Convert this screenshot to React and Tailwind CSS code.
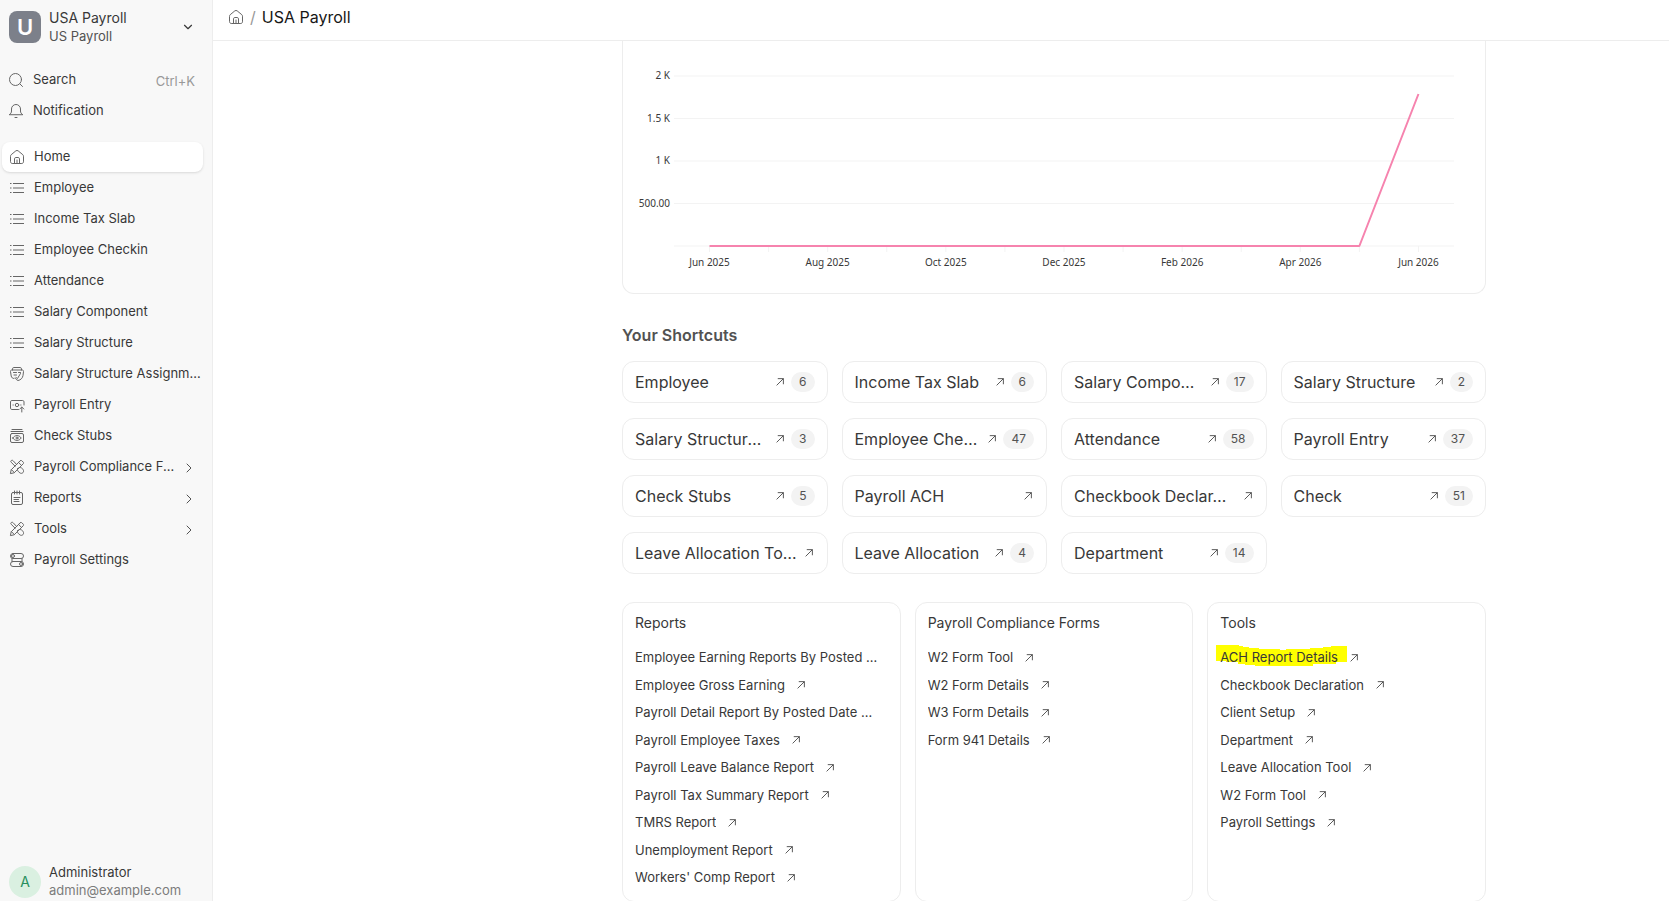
import React from 'react';
import { ChevronDown, ChevronRight } from 'lucide-react';

const Icon = ({ children, className = 'size-4 shrink-0 text-[#666666]' }) => (
  <svg
    viewBox="0 0 16 16"
    fill="none"
    stroke="currentColor"
    strokeLinecap="round"
    strokeLinejoin="round"
    aria-hidden="true"
    className={className}
  >
    {children}
  </svg>
);

const HomeIcon = () => (
  <Icon>
    <path d="M1.5 7.2c0-.6.3-1.1.7-1.5l4.6-3.8a1.9 1.9 0 0 1 2.4 0l4.6 3.8c.4.4.7.9.7 1.5v5.6c0 .9-.8 1.7-1.7 1.7H3.2c-.9 0-1.7-.8-1.7-1.7z" />
    <path d="M5.5 14.3V9.8c0-.7.6-1.3 1.3-1.3h2.4c.7 0 1.3.6 1.3 1.3v4.5M8 11v3" />
  </Icon>
);

const SearchIcon = () => (
  <Icon>
    <circle cx="7.5" cy="7.5" r="6" />
    <path d="m12 12 2.5 2.5" />
  </Icon>
);

const BellIcon = () => (
  <Icon>
    <path d="M1.5 11.5c1.3-.9 2-1.8 2-3.5V6a4.5 4.5 0 0 1 9 0v2c0 1.7.7 2.6 2 3.5zM7 14.5h2" />
  </Icon>
);

const ListIcon = () => (
  <Icon>
    <path d="M4 3.5h11M4 8h11M4 12.5h11M1 3.5h1.5M1 8h1.5M1 12.5h1.5" strokeLinecap="butt" />
  </Icon>
);

const AssignmentIcon = () => (
  <Icon>
    <path d="M3.5 4V2.8c0-.7.6-1.3 1.3-1.3h6.4c.7 0 1.3.6 1.3 1.3V4" />
    <path d="M5 12.5c-1.5 0-2.5-1-2.8-2.5L1.5 5.5c-.1-.8.4-1.5 1.2-1.5h10.6c.8 0 1.3.7 1.2 1.5L14 9.5c-.4 2.6-2.2 4.5-5 5-1.4-.6-2.3-1.4-2.8-2.5" />
    <path d="M4.5 6.5h3M9.5 6.5h2M5 9h2.5M7 11.5l1.5 1 3-5" />
  </Icon>
);

const PayrollEntryIcon = () => (
  <Icon>
    <path d="M9.5 12.5H2.8c-.7 0-1.3-.6-1.3-1.3V4.8c0-.7.6-1.3 1.3-1.3h10.9c.7 0 1.3.6 1.3 1.3V8" />
    <circle cx="8" cy="8" r="1.7" />
    <path d="M4 8h.3M11.7 8h.3M12.8 15v-4.8M10.8 12l2-2 2 2" />
  </Icon>
);

const StubsIcon = () => (
  <Icon>
    <rect x="1.5" y="5.5" width="13" height="9" rx="1.5" />
    <path d="M2 3.5h12M3 1.5h10" />
    <path d="M3.8 10C5 8.3 6.3 7.6 8 7.6s3 .7 4.2 2.4c-1.2 1.7-2.5 2.4-4.2 2.4S5 11.7 3.8 10z" />
    <circle cx="8" cy="10" r="1" />
  </Icon>
);

const ToolsIcon = () => (
  <Icon>
    <path d="m6.2 7.3-4-4c-.6-.6-.6-1.2 0-1.7.7-.5 1.4-.4 1.9.1l3.7 4M9.8 8.7c1.3-.5 2.6-.1 3.7 1l.6.9c.7 1.1.6 2.3-.2 3.1s-2 .9-3 .2L9.5 12.7c-1-1-1.3-2-1-3.2" />
    <path d="m11.2 1.8-9 9-.8 3.8 3.8-.8 9-9c.5-.5.5-1.2 0-1.7l-1.3-1.3c-.5-.5-1.2-.5-1.7 0zM9.6 3.5l3 3M2.5 10.7l2.8 2.8" />
  </Icon>
);

const ReportIcon = () => (
  <Icon>
    <rect x="2.5" y="2.5" width="11" height="12" rx="1.5" />
    <path d="M5.5 1v3M8 1v3M10.5 1v3M5 7.5h6M5 9.5h4.5M5 11.5h5" />
  </Icon>
);

const SettingsIcon = () => (
  <Icon>
    <rect x="1.5" y="1.5" width="13" height="5" rx="2.5" />
    <rect x="1.5" y="9.5" width="13" height="5" rx="2.5" />
    <circle cx="4" cy="4" r="1.5" />
    <circle cx="12" cy="12" r="1.5" />
    <path d="M3 6.5v3M13 6.5v3" />
  </Icon>
);

const ArrowIcon = () => (
  <Icon className="size-3 shrink-0 text-[#383838]">
    <path d="M3.5 12.5 12.5 3.5M5 3.5h7.5v7.5" strokeLinecap="butt" strokeLinejoin="miter" strokeWidth="1.1" />
  </Icon>
);

const NAV = [
  { label: 'Home', icon: HomeIcon, active: true },
  { label: 'Employee', icon: ListIcon },
  { label: 'Income Tax Slab', icon: ListIcon },
  { label: 'Employee Checkin', icon: ListIcon },
  { label: 'Attendance', icon: ListIcon },
  { label: 'Salary Component', icon: ListIcon },
  { label: 'Salary Structure', icon: ListIcon },
  { label: 'Salary Structure Assignment', icon: AssignmentIcon },
  { label: 'Payroll Entry', icon: PayrollEntryIcon },
  { label: 'Check Stubs', icon: StubsIcon },
  { label: 'Payroll Compliance Forms', icon: ToolsIcon, children: true },
  { label: 'Reports', icon: ReportIcon, children: true },
  { label: 'Tools', icon: ToolsIcon, children: true },
  { label: 'Payroll Settings', icon: SettingsIcon },
];

const SHORTCUTS = [
  { label: 'Employee', count: 6 },
  { label: 'Income Tax Slab', count: 6 },
  { label: 'Salary Component', count: 17 },
  { label: 'Salary Structure', count: 2 },
  { label: 'Salary Structure Assignment', count: 3 },
  { label: 'Employee Checkin', count: 47 },
  { label: 'Attendance', count: 58 },
  { label: 'Payroll Entry', count: 37 },
  { label: 'Check Stubs', count: 5 },
  { label: 'Payroll ACH' },
  { label: 'Checkbook Declar…' },
  { label: 'Check', count: 51 },
  { label: 'Leave Allocation To…' },
  { label: 'Leave Allocation', count: 4 },
  { label: 'Department', count: 14 },
];

const LINK_CARDS = [
  {
    title: 'Reports',
    links: [
      'Employee Earning Reports By Posted Date',
      'Employee Gross Earning',
      'Payroll Detail Report By Posted Date Range',
      'Payroll Employee Taxes',
      'Payroll Leave Balance Report',
      'Payroll Tax Summary Report',
      'TMRS Report',
      'Unemployment Report',
      "Workers' Comp Report",
    ],
  },
  {
    title: 'Payroll Compliance Forms',
    links: ['W2 Form Tool', 'W2 Form Details', 'W3 Form Details', 'Form 941 Details'],
  },
  {
    title: 'Tools',
    marked: 'ACH Report Details',
    links: [
      'ACH Report Details',
      'Checkbook Declaration',
      'Client Setup',
      'Department',
      'Leave Allocation Tool',
      'W2 Form Tool',
      'Payroll Settings',
    ],
  },
];

const Sidebar = () => (
  <aside className="flex w-[213px] shrink-0 flex-col border-r border-[#ededed] bg-[#f8f8f8] text-[13px] text-[#383838]">
    <button type="button" className="flex items-center gap-2 pt-2 pr-[17px] pl-[9px] text-left">
      <span className="flex size-8 shrink-0 items-center justify-center rounded-lg bg-[#7c808a] text-[22px] font-semibold text-white">U</span>
      <span className="flex-1">
        <span className="block text-sm leading-[19px]">USA Payroll</span>
        <span className="block leading-[19px] text-[#525252]">US Payroll</span>
      </span>
      <ChevronDown size={14} strokeWidth={2} />
    </button>

    <div className="mt-[18px] pl-2">
      <button type="button" className="flex h-[31px] w-full items-center gap-[9px] pr-[17px] text-left">
        <SearchIcon />
        <span className="flex-1">Search</span>
        <span className="pt-1 text-[#999999]">Ctrl+K</span>
      </button>
      <button type="button" className="flex h-[31px] w-full items-center gap-[9px] text-left">
        <BellIcon />
        <span>Notification</span>
      </button>
    </div>

    <nav className="mt-4 flex flex-col gap-px pr-[9px] pl-[2px]">
      {NAV.map(({ label, icon: NavIcon, active, children }) => (
        <a
          key={label}
          href="#"
          className={
            active
              ? 'flex h-[30px] items-center gap-[9px] rounded-lg bg-white pl-[7px] shadow-sm'
              : 'flex h-[30px] items-center gap-[9px] rounded-lg pl-[7px]'
          }
        >
          <NavIcon />
          <span className="min-w-0 flex-1 truncate">{label}</span>
          {children && <ChevronRight size={16} strokeWidth={1.5} className="mt-[2px] mr-[6px] -ml-[5px] shrink-0 text-[#525252]" />}
        </a>
      ))}
    </nav>

    <button type="button" className="mt-auto flex items-start gap-2 pb-[2px] pl-[9px] text-left">
      <span className="mt-[3px] flex size-8 shrink-0 items-center justify-center rounded-full bg-[#daf0e1] text-sm text-[#278f5e]">A</span>
      <span>
        <span className="block leading-[18px]">Administrator</span>
        <span className="block leading-[18px] text-[#7c7c7c]">admin@example.com</span>
      </span>
    </button>
  </aside>
);

const Y_TICKS = [
  { label: '2 K', y: 35 },
  { label: '1.5 K', y: 77.5 },
  { label: '1 K', y: 120 },
  { label: '500.00', y: 162.5 },
];
const MONTHS = ['Jun 2025', 'Aug 2025', 'Oct 2025', 'Dec 2025', 'Feb 2026', 'Apr 2026', 'Jun 2026'];
const X_START = 86.5;
const X_STEP = 59.08;

const TrendChart = () => (
  <section className="rounded-b-xl border-x border-b border-[#ededed]">
    <svg viewBox="0 0 862 252" role="img" aria-label="Payroll trend" className="block w-full font-['Noto_Sans',sans-serif] text-[10px]">
      {Y_TICKS.map(({ label, y }) => (
        <g key={label}>
          <line x1="51" x2="831" y1={y} y2={y} stroke="#f3f3f3" />
          <text x="47" y={Math.ceil(y + 3)} textAnchor="end" fill="#383838">{label}</text>
        </g>
      ))}
      <line x1="51" x2="831" y1="205" y2="205" stroke="#f3f3f3" />
      {Array.from({ length: 13 }, (_, i) => (
        <line key={i} x1={X_START + i * X_STEP} x2={X_START + i * X_STEP} y1="205" y2="211" stroke="#f3f3f3" />
      ))}
      {MONTHS.map((month, i) => (
        <text key={month} x={X_START + i * 2 * X_STEP} y="225" textAnchor="middle" fill="#383838">{month}</text>
      ))}
      <path
        d={`M${X_START} 205H${X_START + 11 * X_STEP}L${X_START + 12 * X_STEP} 53`}
        fill="none"
        stroke="#f683ae"
        strokeWidth="2"
        strokeLinejoin="bevel"
      />
    </svg>
  </section>
);

const Shortcut = ({ label, count }) => (
  <a href="#" className="flex h-[42px] items-center rounded-xl border border-[#ededed] px-3">
    <span className="min-w-0 flex-1 truncate pr-[5px] text-base text-[#383838]">{label}</span>
    <ArrowIcon />
    {count !== undefined && (
      <span className="ml-[5px] flex h-5 shrink-0 items-center rounded-full bg-[#f3f3f3] px-2 text-xs text-[#525252]">{count}</span>
    )}
  </a>
);

// hand-drawn marker stroke behind a link
const Marker = () => (
  <svg viewBox="0 0 131 21" aria-hidden="true" className="absolute -top-[3px] -left-1 h-[21px] w-[131px]">
    <path
      d="M0 0H23V1H27V2H33V3H43V4H64V5H70V4H94V3H107V2H115V1H131V17H120V19H97V21H39V20H29V19H22V17H10V16H0Z"
      fill="#ffff00"
    />
  </svg>
);

const LinkCard = ({ title, links, marked }) => (
  <section className="min-h-[300px] rounded-xl border border-[#ededed] px-3 pt-[9px] pb-2">
    <h3 className="text-sm leading-[21px] text-[#383838]">{title}</h3>
    <ul className="mt-[11px] text-[13px] leading-normal text-[#383838]">
      {links.map((link) => (
        <li key={link} className="overflow-hidden py-1 pr-2 has-[svg.absolute]:overflow-visible">
          <a href="#" className="relative flex items-center">
            {link === marked && <Marker />}
            <span className="relative max-w-full shrink-0 truncate">{link}</span>
            <span className="ml-[10px] shrink-0">
              <ArrowIcon />
            </span>
          </a>
        </li>
      ))}
    </ul>
  </section>
);

const App = () => (
  <div className="flex h-screen overflow-hidden bg-white font-['Inter',sans-serif] font-[420]">
    <Sidebar />
    <div className="flex min-w-0 flex-1 flex-col">
      <header className="h-[41px] shrink-0 border-b border-[#ededed] px-[15px] pt-[5px]">
        <nav aria-label="Breadcrumb" className="flex h-6 items-center gap-[6px] text-base">
          <a href="#" aria-label="Home">
            <HomeIcon />
          </a>
          <span className="text-[#999999]">/</span>
          <span className="text-[#171717]">USA Payroll</span>
        </nav>
      </header>

      <main className="min-h-0 flex-1 overflow-hidden">
        <div className="mx-auto max-w-[1090px] pl-[226px]">
          <TrendChart />
          <h2 className="mt-[29px] text-base leading-6 font-semibold text-[#525252]">Your Shortcuts</h2>
          <div className="mt-[14px] grid grid-cols-4 gap-x-[14px] gap-y-[15px]">
            {SHORTCUTS.map((shortcut) => (
              <Shortcut key={shortcut.label} {...shortcut} />
            ))}
          </div>
          <div className="mt-7 grid grid-cols-3 gap-[14px]">
            {LINK_CARDS.map((card) => (
              <LinkCard key={card.title} {...card} />
            ))}
          </div>
        </div>
      </main>
    </div>
  </div>
);

export default App;
